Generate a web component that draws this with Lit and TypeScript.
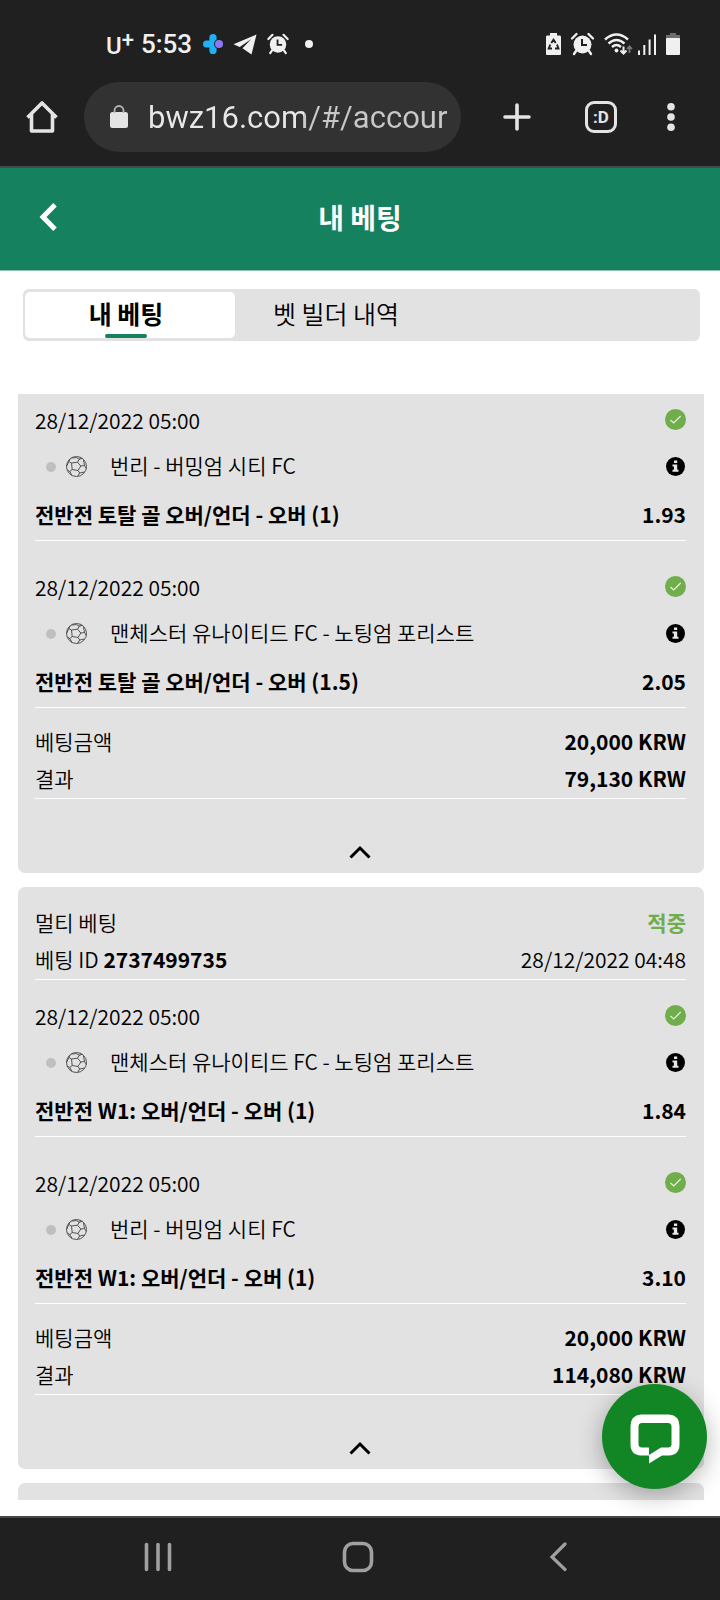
import { LitElement, html, css, svg } from "lit";
import { customElement, property, state } from "lit/decorators.js";

interface Selection {
  date: string;
  event: string;
  market: string;
  odds: string;
}

interface Bet {
  type?: string;
  id?: string;
  status?: string;
  placed?: string;
  selections: Selection[];
  stake: string;
  result: string;
}

const BURNLEY = "번리 - 버밍엄 시티 FC";
const UNITED = "맨체스터 유나이티드 FC - 노팅엄 포리스트";
const KICKOFF = "28/12/2022 05:00";

const BETS: Bet[] = [
  {
    selections: [
      { date: KICKOFF, event: BURNLEY, market: "전반전 토탈 골 오버/언더 - 오버 (1)", odds: "1.93" },
      { date: KICKOFF, event: UNITED, market: "전반전 토탈 골 오버/언더 - 오버 (1.5)", odds: "2.05" },
    ],
    stake: "20,000 KRW",
    result: "79,130 KRW",
  },
  {
    type: "멀티 베팅",
    id: "2737499735",
    status: "적중",
    placed: "28/12/2022 04:48",
    selections: [
      { date: KICKOFF, event: UNITED, market: "전반전 W1: 오버/언더 - 오버 (1)", odds: "1.84" },
      { date: KICKOFF, event: BURNLEY, market: "전반전 W1: 오버/언더 - 오버 (1)", odds: "3.10" },
    ],
    stake: "20,000 KRW",
    result: "114,080 KRW",
  },
];

const reset = css`
  * {
    box-sizing: border-box;
  }
  svg {
    display: block;
    flex: none;
  }
  button {
    display: flex;
    align-items: center;
    justify-content: center;
    margin: 0;
    padding: 0;
    border: 0;
    background: none;
    color: inherit;
    font: inherit;
    cursor: pointer;
  }
`;

const alarmShape = svg`
  <circle cx="12" cy="12.5" r="9" fill="currentColor" />
  <path d="M1.5 6.5L6 2M22.5 6.5L18 2" stroke="currentColor" stroke-width="2.4" stroke-linecap="round" />
  <path d="M5.5 19L3.5 22M18.5 19L20.5 22" stroke="currentColor" stroke-width="2.4" stroke-linecap="round" />
  <path d="M11.5 7V13H16.5" stroke="#202020" stroke-width="2" fill="none" />
`;

@customElement("status-bar")
export class StatusBar extends LitElement {
  static styles = [
    reset,
    css`
      :host {
        display: flex;
        align-items: center;
        justify-content: space-between;
        height: 76px;
        padding: 12px 40px 0 106px;
        box-sizing: border-box;
        color: #f0f0f0;
        font: 500 26px/32px Roboto, sans-serif;
      }
      .group {
        display: flex;
        align-items: center;
        gap: 10px;
      }
      .carrier {
        display: flex;
        align-items: flex-start;
        margin-right: -3px;
        padding-top: 4px;
        font-size: 24px;
        line-height: 36px;
      }
      .plus {
        font-size: 22px;
        line-height: 24px;
      }
      .time {
        margin-right: 1px;
      }
      .more {
        width: 8px;
        height: 8px;
        margin-left: 6px;
        border-radius: 50%;
        background: currentColor;
      }
      .system {
        gap: 9px;
      }
      .wifi {
        margin-right: -5px;
      }
    `,
  ];

  render() {
    return html`
      <div class="group">
        <span class="carrier">U<span class="plus">+</span></span>
        <span class="time">5:53</span>
        <svg width="20" height="20" viewBox="0 0 20 20">
          <path
            d="M10 0a3.6 3.6 0 0 1 3.6 3.6V6.4H16v7.2h-2.4v2.8a3.6 3.6 0 0 1-7.2 0V13.6H3.6a3.6 3.6 0 0 1 0-7.2H6.4V3.6A3.6 3.6 0 0 1 10 0Z"
            fill="#1fb0f5"
          />
          <circle cx="16" cy="10" r="5" fill="#202020" />
          <circle cx="16" cy="10" r="4" fill="#8b78f4" />
        </svg>
        <svg width="24" height="21" viewBox="0 0 24 21" fill="currentColor">
          <path d="M23.5 0.5L0.5 10.2L6.7 12.9L18 5.2L9.5 14.2L18.5 20.5Z" />
        </svg>
        <svg width="22" height="22" viewBox="0 0 24 24" fill="none">${alarmShape}</svg>
        <span class="more"></span>
      </div>
      <div class="group system">
        <svg width="15" height="22" viewBox="0 0 15 22">
          <path d="M4 0H11V2.500H14Q15 2.500 15 4V21Q15 22 14 22H1Q0 22 0 21V4Q0 2.500 1 2.500H4Z" fill="currentColor" />
          <path
            d="M5.300 10L7.500 6.700L9.700 10M11 11.500L12.500 15.500H9M6 15.500H2.700L4.300 11.500"
            fill="none"
            stroke="#202020"
            stroke-width="1.900"
          />
        </svg>
        <svg width="25" height="24" viewBox="-0.5 0 25 24" fill="none">${alarmShape}</svg>
        <svg class="wifi" width="29" height="22" viewBox="0 0 29 22" fill="none" stroke="currentColor" stroke-width="2.400">
          <path d="M1 6.500Q12.500-3.500 24 6.500M4.500 10.500Q12.500 3.500 20.500 10.500M8 14Q12.500 10 17 14" />
          <circle cx="12.500" cy="17.500" r="1.900" fill="currentColor" stroke="none" />
          <path d="M19.500 13.500V20M16.500 17.500L19.500 20.500L22.500 17.500" stroke-width="2" />
          <path d="M25.500 20V13.500M23 16L25.500 13.300L28 16" stroke="#777" stroke-width="1.800" />
        </svg>
        <svg width="20" height="22" viewBox="0 0 20 22" fill="currentColor">
          <path d="M1 17.500h2V22H1ZM6.300 12h2V22h-2ZM11.600 6.500h2V22h-2ZM17 1.500h2V22h-2Z" />
        </svg>
        <svg width="14" height="22" viewBox="0 0 14 22">
          <path d="M4 0H10V2H14V6H0V2H4Z" fill="#6e6e6e" />
          <rect y="5" width="14" height="17" rx="1" fill="currentColor" />
        </svg>
      </div>
    `;
  }
}

@customElement("browser-bar")
export class BrowserBar extends LitElement {
  static styles = [
    reset,
    css`
      :host {
        display: flex;
        align-items: center;
        height: 92px;
        padding: 0 7px 8px 0;
        border-bottom: 2px solid #484848;
        box-sizing: border-box;
        color: #e4e4e4;
      }
      .home,
      .menu {
        width: 84px;
        height: 70px;
      }
      .address {
        display: flex;
        flex: 1;
        align-items: center;
        gap: 20px;
        min-width: 0;
        height: 70px;
        padding: 0 12px 0 26px;
        border-radius: 35px;
        background: #323232;
      }
      .url {
        flex: 1;
        min-width: 0;
        padding: 2px 0 0;
        border: 0;
        outline: 0;
        background: linear-gradient(90deg, #e8e8e8 156px, #c8c8c8 156px);
        background-clip: text;
        -webkit-background-clip: text;
        color: transparent;
        font: 400 31px/40px Roboto, sans-serif;
      }
      .add {
        width: 112px;
        height: 70px;
      }
      .switcher {
        width: 56px;
        height: 70px;
      }
      .count {
        display: flex;
        align-items: center;
        justify-content: center;
        width: 32px;
        height: 32px;
        border: 3px solid currentColor;
        border-radius: 9px;
        font: 700 17px/20px Roboto, sans-serif;
      }
    `,
  ];

  render() {
    return html`
      <button class="home" aria-label="홈">
        <svg width="32" height="32" viewBox="0 0 32 32" fill="none" stroke="currentColor" stroke-width="3.600" stroke-linejoin="round">
          <path d="M1.500 16.500L16 2L30.500 16.500M5.500 13V30H26.500V13" />
        </svg>
      </button>
      <div class="address">
        <svg width="18" height="24" viewBox="0 0 18 24">
          <rect y="7" width="18" height="16" rx="2.500" fill="currentColor" />
          <path d="M4.500 8V5.500a4.500 4.500 0 0 1 9 0V8" fill="none" stroke="#b4b4b4" stroke-width="1.800" />
        </svg>
        <input class="url" type="text" aria-label="주소" value="bwz16.com/#/accour" />
      </div>
      <button class="add" aria-label="새 탭">
        <svg width="28" height="28" viewBox="0 0 28 28" stroke="currentColor" stroke-width="3.600" stroke-linecap="round">
          <path d="M14 2V26M2 14H26" />
        </svg>
      </button>
      <button class="switcher" aria-label="탭 전환"><span class="count">:D</span></button>
      <button class="menu" aria-label="메뉴">
        <svg width="8" height="28" viewBox="0 0 8 28" fill="currentColor">
          <circle cx="4" cy="3.800" r="3.800" />
          <circle cx="4" cy="14" r="3.800" />
          <circle cx="4" cy="24.200" r="3.800" />
        </svg>
      </button>
    `;
  }
}

@customElement("bet-card")
export class BetCard extends LitElement {
  static styles = [
    reset,
    css`
      :host {
        display: block;
        flex: none;
        padding: 0 18px 0 17px;
        border-radius: 7px;
        background: #e2e2e2;
        color: #000;
      }
      .row {
        display: flex;
        align-items: center;
        justify-content: space-between;
        height: 37px;
        padding-bottom: 4px;
      }
      .head {
        padding-top: 18px;
        margin-bottom: 13px;
        border-bottom: 1px solid #fff;
      }
      .strong {
        font-weight: 700;
      }
      .status {
        color: #71ac4e;
        font-weight: 700;
      }
      .selection {
        border-bottom: 1px solid #fff;
      }
      .selection + .selection {
        margin-top: 23px;
      }
      .date,
      .event {
        height: 46px;
        padding-bottom: 1px;
      }
      .event {
        padding-bottom: 0;
      }
      .market {
        height: 51px;
        padding-bottom: 2px;
        font-weight: 700;
      }
      .match {
        display: flex;
        align-items: center;
        padding-left: 11px;
      }
      .dot {
        width: 10px;
        height: 10px;
        margin: 2px 10px 0 0;
        border-radius: 50%;
        background: #bfbfc1;
      }
      .name {
        padding: 0 0 2px 23px;
      }
      .info {
        width: 21px;
        height: 21px;
      }
      .totals {
        padding-top: 16px;
        border-bottom: 1px solid #fff;
      }
      .toggle {
        width: 100%;
        height: 74px;
        padding: 32px 2px 0 0;
      }
    `,
  ];

  @property({ attribute: false }) bet!: Bet;

  private renderSelection(item: Selection) {
    return html`
      <section class="selection">
        <div class="row date">
          <span>${item.date}</span>
          <svg width="21" height="21" viewBox="0 0 21 21" role="img" aria-label="적중">
            <circle cx="10.500" cy="10.500" r="10.500" fill="#70ad4b" />
            <path d="M5.500 11L8.700 14L15.700 7" fill="none" stroke="#e8f3e0" stroke-width="1.200" />
          </svg>
        </div>
        <div class="row event">
          <span class="match">
            <span class="dot"></span>
            <svg width="21" height="21" viewBox="0 0 21 21" fill="none" stroke="#444" stroke-width="0.900">
              <circle cx="10.500" cy="10.500" r="10" />
              <path d="M5.500 7L11.500 6.200L14.800 10L12 14.500L6.200 13.500Z" />
              <path d="M5.500 7L2.800 5.500M11.500 6.200L13.300 3.200M14.800 10L18.500 9.500M12 14.500L13.700 17M6.200 13.500L3.800 15.500" />
              <path d="M5.500 2L10.500 1.600L13.300 3.200L16.500 2.300M13.300 3.200L15 1.500M17.500 4L18.500 9.500L20.400 12.500M18.500 16L13.700 17L11.500 20.400M6 19.700L3.800 15.500L1.500 14M0.600 10.500L2.800 5.500L4 3" />
            </svg>
            <span class="name">${item.event}</span>
          </span>
          <button class="info" aria-label="경기 정보">
            <svg width="19" height="19" viewBox="0 0 19 19">
              <circle cx="9.500" cy="9.500" r="9.500" fill="#000" />
              <path d="M8 3.500h3.200v2.600H8ZM6.500 7.500h4.700v5.200h1.300v2h-6v-2h1.400V9.500H6.500Z" fill="#e8e8e8" />
            </svg>
          </button>
        </div>
        <div class="row market">
          <span>${item.market}</span>
          <span>${item.odds}</span>
        </div>
      </section>
    `;
  }

  render() {
    const { bet } = this;
    if (!bet) return html``;
    return html`
      ${bet.id
        ? html`
            <header class="head">
              <div class="row"><span>${bet.type}</span><span class="status">${bet.status}</span></div>
              <div class="row">
                <span>베팅 ID <span class="strong">${bet.id}</span></span>
                <span>${bet.placed}</span>
              </div>
            </header>
          `
        : ""}
      ${bet.selections.map((item) => this.renderSelection(item))}
      <div class="totals">
        <div class="row"><span>베팅금액</span><span class="strong">${bet.stake}</span></div>
        <div class="row"><span>결과</span><span class="strong">${bet.result}</span></div>
      </div>
      <button class="toggle" aria-label="접기">
        <svg width="22" height="14" viewBox="0 0 22 14" fill="none" stroke="#000" stroke-width="3">
          <path d="M1.500 12.500L11 3L20.500 12.500" />
        </svg>
      </button>
    `;
  }
}

@customElement("app-root")
export class AppRoot extends LitElement {
  static styles = [
    reset,
    css`
      :host {
        display: flex;
        flex-direction: column;
        height: 100vh;
        background: #fff;
        font: 350 21px/30px "Noto Sans CJK KR", sans-serif;
      }
      .chrome {
        flex: none;
        background: #202020;
      }
      .header {
        display: grid;
        grid-template-columns: 96px 1fr 96px;
        align-items: center;
        flex: none;
        height: 103px;
        padding-bottom: 5px;
        border-bottom: 1px solid #8cc0ae;
        background: #16815e;
        color: #fff;
      }
      .back {
        height: 100%;
      }
      .title {
        margin: 0;
        font-size: 28px;
        line-height: 40px;
        font-weight: 700;
        text-align: center;
      }
      .tabs {
        display: flex;
        flex: none;
        height: 52px;
        margin: 18px 20px 53px 23px;
        padding: 3px 2px;
        border-radius: 6px;
        background: #e2e2e2;
      }
      .tab {
        flex-direction: column;
        justify-content: flex-end;
        width: 31.2%;
        padding-right: 8px;
        border-radius: 5px;
        color: #000;
        font-size: 25px;
        line-height: 36px;
      }
      .tab::after {
        content: "";
        width: 42px;
        height: 4px;
        margin-top: 3px;
        border-radius: 2px;
      }
      .active {
        background: #fff;
        font-weight: 700;
      }
      .active::after {
        background: #16815e;
      }
      .content {
        position: relative;
        display: flex;
        flex: 1;
        flex-direction: column;
        min-height: 0;
        padding: 0 16px 16px 18px;
      }
      .list {
        display: flex;
        flex: 1;
        flex-direction: column;
        gap: 14px;
        min-height: 0;
        overflow: hidden;
      }
      .scrolled {
        padding-top: 3px;
        border-radius: 0 0 7px 7px;
      }
      .next {
        flex: none;
        height: 74px;
        border-radius: 7px;
        background: #e2e2e2;
      }
      .chat {
        position: absolute;
        right: 13px;
        bottom: 27px;
        width: 105px;
        height: 105px;
        padding-top: 4px;
        border-radius: 50%;
        background: #128624;
        box-shadow: 0 6px 24px rgba(0, 0, 0, 0.3);
      }
      .nav {
        display: flex;
        flex: none;
        align-items: center;
        justify-content: center;
        height: 84px;
        padding: 0 4px 4px 0;
        border-top: 2px solid #484848;
        background: #202020;
        color: #a0a0a0;
      }
      .key {
        width: 28%;
        height: 100%;
      }
    `,
  ];

  @state() private tab = 0;

  private tabs = ["내 베팅", "벳 빌더 내역"];

  render() {
    return html`
      <div class="chrome">
        <status-bar></status-bar>
        <browser-bar></browser-bar>
      </div>
      <header class="header">
        <button class="back" aria-label="뒤로">
          <svg width="18" height="28" viewBox="0 0 18 28" fill="none" stroke="#fff" stroke-width="5">
            <path d="M16 1.800L4 14L16 26.200" />
          </svg>
        </button>
        <h1 class="title">내 베팅</h1>
      </header>
      <div class="tabs" role="tablist">
        ${this.tabs.map(
          (label, index) => html`
            <button
              class="tab ${this.tab === index ? "active" : ""}"
              role="tab"
              aria-selected=${this.tab === index}
              @click=${() => (this.tab = index)}
            >
              ${label}
            </button>
          `
        )}
      </div>
      <main class="content">
        <div class="list">
          ${BETS.map((bet) => html`<bet-card class=${bet.id ? "" : "scrolled"} .bet=${bet}></bet-card>`)}
          <div class="next"></div>
        </div>
        <button class="chat" aria-label="채팅">
          <svg width="50" height="50" viewBox="0 0 50 50">
            <path
              d="M11 0.500H39Q49.500 1.500 49.500 12V30Q49.500 41 39 41.500H32L19 49.500V41.500H11Q0.500 41 0.500 30V12Q0.500 1.500 11 0.500Z"
              fill="#fff"
            />
            <path d="M12 9H38Q41.500 9 41.500 12.500V30Q41.500 33.500 38 33.500H31L19 41V33.500H12Q8.500 33.500 8.500 30V12.500Q8.500 9 12 9Z" fill="#128624" />
          </svg>
        </button>
      </main>
      <nav class="nav">
        <button class="key" aria-label="최근 앱">
          <svg width="28" height="30" viewBox="0 0 28 30" stroke="currentColor" stroke-width="3.600" stroke-linecap="round">
            <path d="M2.500 2.500V27.500M14 2.500V27.500M25.500 2.500V27.500" />
          </svg>
        </button>
        <button class="key" aria-label="홈 화면">
          <svg width="32" height="32" viewBox="0 0 32 32" fill="none" stroke="currentColor" stroke-width="3.600">
            <rect x="2.500" y="2.500" width="27" height="27" rx="8.500" />
          </svg>
        </button>
        <button class="key" aria-label="뒤로 가기">
          <svg width="18" height="30" viewBox="0 0 18 30" fill="none" stroke="currentColor" stroke-width="3.200" stroke-linecap="round">
            <path d="M16 2L3 15L16 27.500" />
          </svg>
        </button>
      </nav>
    `;
  }
}
